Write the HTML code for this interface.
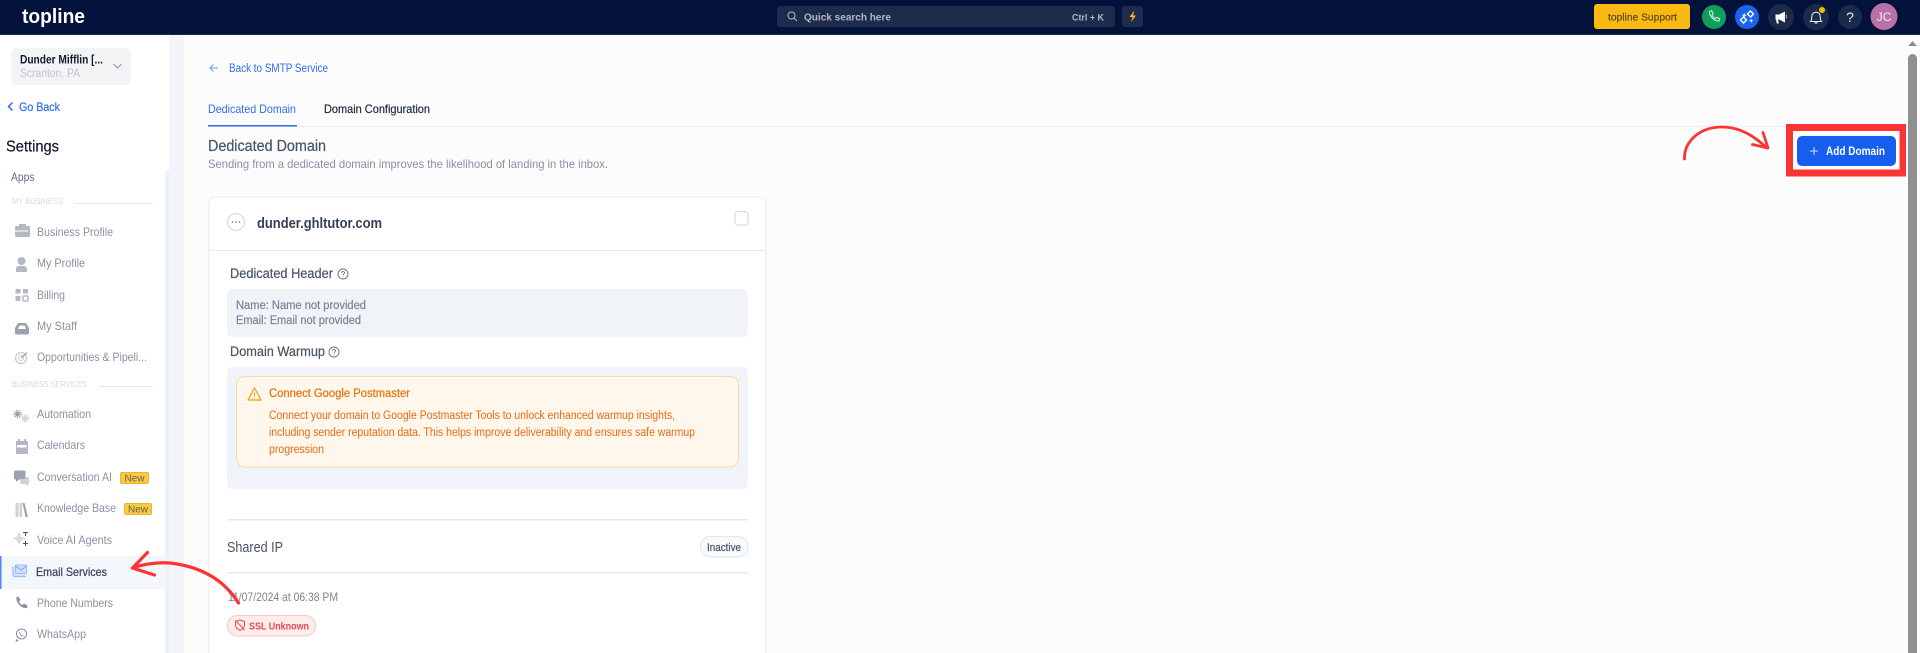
<!DOCTYPE html>
<html lang="en"><head><meta charset="utf-8"><title>Dedicated Domain</title>
<style>
html,body{margin:0;padding:0;width:1920px;height:653px;overflow:hidden;background:#fcfcfd}
svg{display:block;filter:blur(.35px)}
text{font-family:"Liberation Sans",sans-serif;white-space:pre}
.nav{font-size:12px;fill:#8b90a3}
.med{stroke:currentColor;stroke-width:.2px}
</style></head><body>
<svg width="1920" height="653" viewBox="0 0 1920 653" xmlns="http://www.w3.org/2000/svg">
<rect width="1920" height="653" fill="#fcfcfd"/>
<!-- top bar -->
<rect width="1920" height="34" fill="#02123b"/>
<rect y="34" width="1920" height="1" fill="#1a2a55"/>
<text x="22" y="23" font-size="20.500" font-weight="700" fill="#fff" textLength="63" lengthAdjust="spacingAndGlyphs">topline</text>
<rect x="777" y="6" width="338" height="21" rx="3" fill="#1e2b4d"/>
<circle cx="791.500" cy="15.500" r="3.500" fill="none" stroke="#b4b9c6" stroke-width="1"/><path d="M794 18l3 3" stroke="#b4b9c6" stroke-width="1"/>
<text x="804" y="20.500" font-size="10.500" font-weight="700" fill="#b4b9c6" textLength="87" lengthAdjust="spacingAndGlyphs">Quick search here</text>
<text x="1072" y="20.500" font-size="9.500" font-weight="700" fill="#b4b9c6" textLength="32" lengthAdjust="spacingAndGlyphs">Ctrl + K</text>
<rect x="1122" y="6" width="21" height="21" rx="3" fill="#1e2b4d"/>
<path d="M1134.500 10.500l-5 6.500h3l-1.500 5 5-6.500h-3z" fill="#fdb913"/>
<rect x="1594" y="4" width="96" height="25" rx="3" fill="#fdb913"/>
<text x="1608" y="20.500" font-size="10.500" fill="#5b4a17" class="med" color="#5b4a17" textLength="69" lengthAdjust="spacingAndGlyphs">topline Support</text>
<circle cx="1714" cy="17" r="12" fill="#0e9f5a"/>
<path d="M1709.500 11.500l2.200-.8 1.600 3.200-1.300 1.200c.6 1.500 1.900 2.800 3.400 3.400l1.200-1.300 3.200 1.600-.8 2.200c-4.600.3-9.800-4.900-9.500-9.500z" fill="none" stroke="#c9f0da" stroke-width="1.100" stroke-linejoin="round"/>
<circle cx="1747" cy="17" r="12" fill="#1d63ed"/>
<g fill="none" stroke="#fff" stroke-width="1.400"><path d="M1740.500 20l3 3 3-3-3-3z"/><path d="M1747.500 14l3 3 3-3-3-3z"/></g><path d="M1743.500 14.500l.8-1.800.8 1.800 1.800.8-1.800.8-.8 1.800-.8-1.800-1.800-.8zM1750.500 20l.7-1.500.7 1.500 1.500.7-1.500.7-.7 1.500-.7-1.500-1.500-.7z" fill="#dbe6ff"/>
<circle cx="1781" cy="17" r="13" fill="#1c2a4a"/>
<path d="M1775.500 14.500h3.500l6-3v11l-6-3h-1l.8 4h-2l-.8-4h-.5z" fill="#fff"/><path d="M1786.500 14.500v4" stroke="#ff7a7a" stroke-width="1"/>
<circle cx="1816" cy="17" r="13" fill="#1c2a4a"/>
<path d="M1810.500 21.500c1.200-1.200 1.300-2.500 1.300-5 0-2.600 1.800-4.300 4.200-4.300s4.200 1.700 4.200 4.300c0 2.500.1 3.800 1.300 5zM1814.500 21.500c0 2.200 3 2.200 3 0" fill="none" stroke="#dfe3ea" stroke-width="1.100"/>
<circle cx="1822" cy="10" r="3" fill="#f5b50b"/>
<circle cx="1850" cy="17" r="12" fill="#1c2a4a"/>
<text x="1850" y="22" font-size="14" fill="#e8eaf0" text-anchor="middle">?</text>
<circle cx="1884" cy="16.500" r="13.500" fill="#b872a8"/>
<text x="1876.500" y="21" font-size="12" fill="#f4e6f0" textLength="15" lengthAdjust="spacingAndGlyphs">JC</text>

<!-- sidebar -->
<rect y="35" width="169" height="618" fill="#fff"/>
<rect x="165" y="171" width="4" height="482" fill="#eef1fb"/>
<rect x="169" y="35" width="15" height="618" fill="#f3f5fa"/>
<rect x="11" y="48" width="120" height="37" rx="6" fill="#f3f4f6"/>
<text x="20" y="63.500" font-size="11.500" font-weight="700" fill="#101828" textLength="83" lengthAdjust="spacingAndGlyphs">Dunder Mifflin [...</text>
<text x="20" y="77" font-size="11.500" fill="#c0c4cc" textLength="60" lengthAdjust="spacingAndGlyphs">Scranton, PA</text>
<path d="M113.500 64l4 4 4-4" fill="none" stroke="#8b90a3" stroke-width="1"/>
<path d="M12.500 102.500l-4 4 4 4" fill="none" stroke="#2f6df0" stroke-width="1.500"/>
<text x="19" y="111" font-size="12" fill="#2f6df0" class="med" color="#2f6df0" textLength="41" lengthAdjust="spacingAndGlyphs">Go Back</text>
<text x="6" y="151.500" font-size="16" fill="#101828" class="med" color="#101828" textLength="53" lengthAdjust="spacingAndGlyphs">Settings</text>
<text x="11" y="181" font-size="11.500" fill="#667085" textLength="23.500" lengthAdjust="spacingAndGlyphs">Apps</text>
<text x="12" y="204" font-size="8.500" fill="#d5d8e0" textLength="51" lengthAdjust="spacingAndGlyphs">MY BUSINESS</text>
<rect x="75" y="203" width="78" height="1" fill="#e7e9ee"/>
<text x="37" y="236" class="nav" textLength="76" lengthAdjust="spacingAndGlyphs">Business Profile</text>
<text x="37" y="267" class="nav" textLength="48" lengthAdjust="spacingAndGlyphs">My Profile</text>
<text x="37" y="299" class="nav" textLength="28" lengthAdjust="spacingAndGlyphs">Billing</text>
<text x="37" y="330" class="nav" textLength="40" lengthAdjust="spacingAndGlyphs">My Staff</text>
<text x="37" y="361" class="nav" textLength="110" lengthAdjust="spacingAndGlyphs">Opportunities &amp; Pipeli...</text>
<text x="12" y="387" font-size="8.500" fill="#d5d8e0" textLength="75" lengthAdjust="spacingAndGlyphs">BUSINESS SERVICES</text>
<rect x="99" y="386" width="54" height="1" fill="#e7e9ee"/>
<text x="37" y="418" class="nav" textLength="54" lengthAdjust="spacingAndGlyphs">Automation</text>
<text x="37" y="449" class="nav" textLength="48" lengthAdjust="spacingAndGlyphs">Calendars</text>
<text x="37" y="481" class="nav" textLength="75" lengthAdjust="spacingAndGlyphs">Conversation AI</text>
<rect x="120.500" y="472.500" width="28" height="11" rx="1.500" fill="#f8ca45" stroke="#e8b432"/>
<text x="124.500" y="481.500" font-size="10.500" fill="#6a6248" textLength="20" lengthAdjust="spacingAndGlyphs">New</text>
<text x="37" y="512" class="nav" textLength="79" lengthAdjust="spacingAndGlyphs">Knowledge Base</text>
<rect x="124.500" y="503.500" width="27" height="11" rx="1.500" fill="#f8ca45" stroke="#e8b432"/>
<text x="128" y="512.500" font-size="10.500" fill="#6a6248" textLength="20" lengthAdjust="spacingAndGlyphs">New</text>
<text x="37" y="544" class="nav" textLength="75" lengthAdjust="spacingAndGlyphs">Voice AI Agents</text>
<rect y="556" width="165" height="33" fill="#f3f6fb"/><rect y="556" width="1.500" height="33" fill="#4f86f5"/>
<text x="36" y="576" font-size="12" fill="#344054" class="med" color="#344054" textLength="71" lengthAdjust="spacingAndGlyphs">Email Services</text>
<text x="37" y="607" class="nav" textLength="76" lengthAdjust="spacingAndGlyphs">Phone Numbers</text>
<text x="37" y="638" class="nav" textLength="49" lengthAdjust="spacingAndGlyphs">WhatsApp</text>
<!-- sidebar icons -->
<g fill="#b4b8c4">
<path d="M15 227.500q0-1.500 1.500-1.500h2.500v-2h7v2h2.500q1.500 0 1.500 1.500v8q0 1.500-1.500 1.500h-12q-1.500 0-1.500-1.500z"/><rect x="15" y="230.500" width="13" height="1" fill="#fff"/>
<circle cx="21.500" cy="261" r="4"/><path d="M16 272v-3q0-3 3-3h5q3 0 3 3v3z"/>
<rect x="15.500" y="289" width="5" height="4.500"/><rect x="23" y="289" width="5" height="4.500"/><rect x="15.500" y="296" width="5" height="5"/><rect x="23" y="296" width="5" height="5" rx="1" fill="none" stroke="#b4b8c4" stroke-width="1.500"/>
<path d="M15 333v-5l3-5h8l3 5v5q0 1.500-1.500 1.500h-11q-1.500 0-1.500-1.500z" fill="#9ca1b0"/><path d="M18 329l1.500-3.500h5l1.500 3.500z" fill="#fff"/>
<circle cx="17.500" cy="414" r="2.500" fill="#9ca1b0"/><circle cx="17.500" cy="414" r="3.500" fill="none" stroke="#9ca1b0" stroke-width="1.500" stroke-dasharray="1.300 1.200"/>
<circle cx="25" cy="418.500" r="2.500" fill="#d0d3dc"/><circle cx="25" cy="418.500" r="3.500" fill="none" stroke="#d0d3dc" stroke-width="1.500" stroke-dasharray="1.300 1.200"/>
<path d="M16 441h2v-2h2v2h4v-2h2v2h2v13h-12z"/><rect x="17" y="445" width="9.500" height="2.500" fill="#fff"/>
<path d="M14 472q0-1.500 1.500-1.500h8.500q1.500 0 1.500 1.500v6q0 1.500-1.500 1.500h-5l-3 2.500v-2.500q-2 0-2-1.500z" fill="#9ca1b0"/><path d="M20 480h5l1-3h3v7h-1v2l-2.500-2h-5z" fill="#d0d3dc"/>
<path d="M15.500 503h3v14h-3zM19.500 503h2.500v14h-2.500z" fill="#cdd0d8"/><path d="M22.500 503h2l3.500 14h-2.500z" fill="#9ca1b0"/>
<path d="M19 532l2 4.500 4.500 2-4.500 2-2 4.500-2-4.500-4.500-2 4.500-2z" fill="#d8dae2"/>
<path d="M23 532h5v1h-2v3h-1v-3h-2zM25 541v2h-2v1h2v2h1v-2h2v-1h-2v-2z" fill="#4a4f5e"/>
</g>
<g fill="none">
<circle cx="21" cy="358" r="5.500" stroke="#c8ccd6" stroke-width="1.300"/><circle cx="21" cy="358" r="2.500" stroke="#c8ccd6" stroke-width="1.100"/><path d="M21 358l6-5.500" stroke="#9ca1b0" stroke-width="1.200"/>
<rect x="13.500" y="566" width="12" height="10" fill="#d6e3fb"/><path d="M13 567v7.500q0 2 2 2h11" stroke="#9dbcf5" stroke-width="1.300"/>
<rect x="15.500" y="565" width="11" height="8.500" rx="1" fill="#cfdefb" stroke="#9dbcf5"/><path d="M15.500 566l5.500 4 5.500-4" stroke="#7ea5ef"/>
<path d="M16 597l2.500-.5 2 3.500-1.500 1.500c.8 1.800 2 3 3.500 3.500l1.500-1.500 3.500 2-.5 2.500c-5.500 1-11.500-5.500-10.500-11z" fill="#8b90a3"/>
<circle cx="21.500" cy="634" r="5" stroke="#8b90a3" stroke-width="1.100"/><path d="M17 639l-.8 2.200 2.300-.8" stroke="#8b90a3"/><path d="M19.500 632c.2 2 1.800 3.600 4 4" stroke="#8b90a3"/>
</g>

<!-- main header -->
<path d="M218 68h-8m3.500-3.500l-3.500 3.500 3.500 3.500" fill="none" stroke="#6b9bf5" stroke-width="1"/>
<text x="229" y="72" font-size="11.500" fill="#2f6df0" textLength="99" lengthAdjust="spacingAndGlyphs">Back to SMTP Service</text>
<text x="208" y="113" font-size="12" fill="#2f6df0" textLength="88" lengthAdjust="spacingAndGlyphs">Dedicated Domain</text>
<text x="324" y="113" font-size="12" fill="#1d2939" class="med" color="#1d2939" textLength="106" lengthAdjust="spacingAndGlyphs">Domain Configuration</text>
<rect x="208" y="126" width="1697" height="1" fill="#eef0f6"/>
<rect x="208" y="125" width="89" height="1.500" fill="#2f6df0"/>
<text x="208" y="151" font-size="15.500" fill="#475467" class="med" color="#475467" textLength="118" lengthAdjust="spacingAndGlyphs">Dedicated Domain</text>
<text x="208" y="168" font-size="12" fill="#8b90a3" textLength="400" lengthAdjust="spacingAndGlyphs">Sending from a dedicated domain improves the likelihood of landing in the inbox.</text>

<!-- card -->
<rect x="209" y="197" width="557" height="470" rx="6" fill="#fff" stroke="#e8eaee"/>
<circle cx="236" cy="222" r="8.500" fill="#fff" stroke="#d0d5dd"/>
<g fill="#667085"><circle cx="232.500" cy="222" r=".8"/><circle cx="236" cy="222" r=".8"/><circle cx="239.500" cy="222" r=".8"/></g>
<text x="257" y="228" font-size="15" font-weight="700" fill="#344054" textLength="125" lengthAdjust="spacingAndGlyphs">dunder.ghltutor.com</text>
<rect x="735" y="211.500" width="13" height="13.500" rx="3" fill="#fff" stroke="#d0d5dd"/>
<rect x="209" y="250" width="557" height="1" fill="#e8eaee"/>
<text x="230" y="278" font-size="13.500" fill="#475467" class="med" color="#475467" textLength="103" lengthAdjust="spacingAndGlyphs">Dedicated Header</text>
<g fill="none" stroke="#667085" stroke-width=".9"><circle cx="343" cy="274" r="5"/><path d="M341.500 272.800c.2-1.800 3-1.600 3 .1 0 1.200-1.500 1.200-1.500 2.300"/><path d="M343 276.500v.6"/></g>
<rect x="227" y="289" width="521" height="48" rx="5" fill="#f0f3f8"/>
<text x="236" y="309" font-size="11.500" fill="#7a8294" class="med" color="#7a8294" textLength="130" lengthAdjust="spacingAndGlyphs">Name: Name not provided</text>
<text x="236" y="324" font-size="11.500" fill="#7a8294" class="med" color="#7a8294" textLength="125" lengthAdjust="spacingAndGlyphs">Email: Email not provided</text>
<text x="230" y="356" font-size="13.500" fill="#475467" class="med" color="#475467" textLength="95" lengthAdjust="spacingAndGlyphs">Domain Warmup</text>
<g fill="none" stroke="#667085" stroke-width=".9"><circle cx="334" cy="352" r="5"/><path d="M332.500 350.800c.2-1.800 3-1.600 3 .1 0 1.200-1.500 1.200-1.500 2.300"/><path d="M334 354.500v.6"/></g>
<rect x="227" y="367" width="521" height="122" rx="5" fill="#f0f3f8"/>
<rect x="236.500" y="376.500" width="502" height="90.500" rx="8" fill="#fff6ec" stroke="#fbd9a5"/>
<path d="M254.500 388l6.500 12h-13z" fill="none" stroke="#f59e0b" stroke-width="1.200" stroke-linejoin="round"/><path d="M254.500 392.500v4M254.500 397.700v.8" stroke="#f59e0b" stroke-width="1"/>
<text x="269" y="397" font-size="11.500" fill="#e8710a" class="med" color="#e8710a" textLength="141" lengthAdjust="spacingAndGlyphs">Connect Google Postmaster</text>
<text x="269" y="419" font-size="11.500" fill="#ec6a10" textLength="406" lengthAdjust="spacingAndGlyphs">Connect your domain to Google Postmaster Tools to unlock enhanced warmup insights,</text>
<text x="269" y="436" font-size="11.500" fill="#ec6a10" textLength="426" lengthAdjust="spacingAndGlyphs">including sender reputation data. This helps improve deliverability and ensures safe warmup</text>
<text x="269" y="453" font-size="11.500" fill="#ec6a10" textLength="55" lengthAdjust="spacingAndGlyphs">progression</text>
<rect x="227" y="519" width="521" height="1.500" fill="#e6e8ec"/>
<text x="227" y="552" font-size="15" fill="#475467" textLength="56" lengthAdjust="spacingAndGlyphs">Shared IP</text>
<rect x="700.500" y="536.500" width="47.500" height="20.500" rx="10" fill="#f9fafc" stroke="#e3e5ef"/>
<text x="707" y="551" font-size="11" fill="#475467" class="med" color="#475467" textLength="34" lengthAdjust="spacingAndGlyphs">Inactive</text>
<rect x="227" y="572" width="521" height="1.500" fill="#e6e8ec"/>
<text x="228" y="601" font-size="12" fill="#7a8294" textLength="110" lengthAdjust="spacingAndGlyphs">11/07/2024 at 06:38 PM</text>
<rect x="227.500" y="615.500" width="88" height="20.500" rx="10" fill="#feeceb" stroke="#f9c4c0"/>
<path d="M240 620l4.500 1.500v3.500c0 3-2.500 4.500-4.500 5.500-2-1-4.500-2.500-4.500-5.500v-3.500zM235.500 620.500l9 9.500" fill="none" stroke="#d9534f" stroke-width="1"/>
<text x="249" y="629.500" font-size="10.500" font-weight="700" fill="#e5484d" textLength="60" lengthAdjust="spacingAndGlyphs">SSL Unknown</text>

<!-- left red arrow -->
<g fill="none" stroke="#fb3333" stroke-width="3.200" stroke-linecap="round" stroke-linejoin="round">
<path d="M238.500 603C226 583 205 567 170 563 156 562 144 564 132.500 568"/>
<path d="M147.500 552.500L132.500 568 154.500 575"/>
<!-- right red arrow -->
<path d="M1684.500 159C1684 142 1699 127 1722 127 1742 127 1756 138 1767 148" stroke-width="2.800"/>
<path d="M1763 132.500L1768 148 1752.500 144.500" stroke-width="2.800"/>
</g>

<!-- add domain -->
<rect x="1789.500" y="127.500" width="113.500" height="45.500" fill="#fff" stroke="#fb3333" stroke-width="7"/>
<rect x="1797" y="136" width="99" height="30" rx="5" fill="#155eef"/>
<path d="M1810 151h8M1814 147v8" stroke="#cfe0ff" stroke-width="1"/>
<text x="1826" y="155" font-size="12" font-weight="700" fill="#fff" textLength="59" lengthAdjust="spacingAndGlyphs">Add Domain</text>

<!-- page scrollbar -->
<rect x="1906" y="35" width="14" height="618" fill="#fdfdfd"/>
<path d="M1912.500 41l4.500 5h-9z" fill="#8f8f8f"/>
<rect x="1908" y="54" width="9" height="610" rx="4.500" fill="#8f8f8f"/>
</svg>
</body></html>
